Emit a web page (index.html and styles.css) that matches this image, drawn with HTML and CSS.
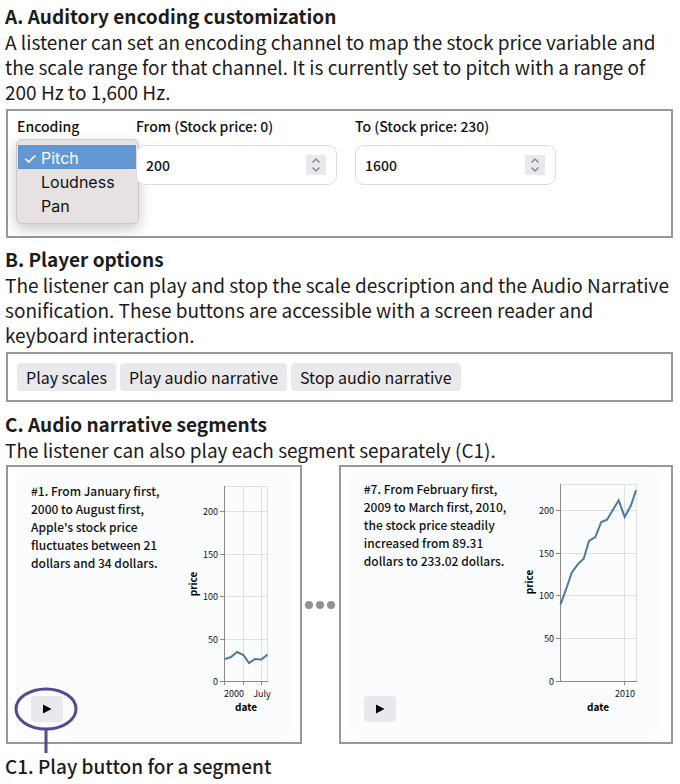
FILE: index.html
```html
<!DOCTYPE html>
<html lang="en">
<head>
<meta charset="utf-8">
<meta name="viewport" content="width=device-width, initial-scale=1">
<title>Audio Narrative player</title>
<link rel="stylesheet" href="styles.css">
</head>
<body>
<main>
  <section class="section">
    <h2>A. Auditory encoding customization</h2>
    <p>A listener can set an encoding channel to map the stock price variable and the scale range for that channel. It is currently set to pitch with a range of 200 Hz to 1,600 Hz.</p>
    <form class="box encoding">
      <div class="field">
        <label for="encoding">Encoding</label>
        <select id="encoding" class="menu" size="3">
          <option selected>Pitch</option>
          <option>Loudness</option>
          <option>Pan</option>
        </select>
      </div>
      <div class="field">
        <label for="from">From (Stock price: 0)</label>
        <div class="number">
          <input id="from" type="number" value="200">
          <svg class="stepper" viewBox="0 0 20 20" aria-hidden="true"><path d="M6.500 7.500 10 4l3.500 3.500M6.500 12.500 10 16l3.500-3.500"/></svg>
        </div>
      </div>
      <div class="field">
        <label for="to">To (Stock price: 230)</label>
        <div class="number">
          <input id="to" type="number" value="1600">
          <svg class="stepper" viewBox="0 0 20 20" aria-hidden="true"><path d="M6.500 7.500 10 4l3.500 3.500M6.500 12.500 10 16l3.500-3.500"/></svg>
        </div>
      </div>
    </form>
  </section>

  <section class="section">
    <h2>B. Player options</h2>
    <p>The listener can play and stop the scale description and the Audio Narrative sonification. These buttons are accessible with a screen reader and keyboard interaction.</p>
    <div class="box player">
      <button type="button">Play scales</button>
      <button type="button">Play audio narrative</button>
      <button type="button">Stop audio narrative</button>
    </div>
  </section>

  <section class="section">
    <h2>C. Audio narrative segments</h2>
    <p>The listener can also play each segment separately (C1).</p>
    <div class="segments">
      <article class="box segment first">
        <div class="card">
          <div class="story">
            <p>#1. From January first, 2000 to August first, Apple's stock price fluctuates between 21 dollars and 34 dollars.</p>
            <div class="play-wrap">
              <button type="button" class="play" aria-label="Play segment 1"><svg viewBox="0 0 10 10" aria-hidden="true"><path d="M1 0.500 9.500 5 1 9.500z"/></svg></button>
              <svg class="callout" viewBox="0 0 64 70" aria-hidden="true"><ellipse cx="32" cy="23" rx="30" ry="20"/><path d="M32 43v24"/></svg>
            </div>
          </div>
          <svg class="chart" width="90" height="236" viewBox="185 480 90 236" role="img" aria-label="Stock price in 2000">
            <path class="grid" d="M225 486.500h43M225 511.500h43M225 554.500h43M225 596.500h43M225 639.500h43M243.500 486v195M261.500 486v195M267.500 486v195"/>
            <path class="axis" d="M224.500 486v199M220 681.500h48M220 511.500h5M220 554.500h5M220 596.500h5M220 639.500h5M243.500 681v4M261.500 681v4"/>
            <path class="line" d="M225 659l6-2 6-5 6.500 3 5.500 8 6-4 6.500.5 6-5"/>
            <g class="ticks"><text x="218" y="515">200</text><text x="218" y="558">150</text><text x="218" y="600">100</text><text x="218" y="643">50</text><text x="218" y="685">0</text></g>
            <g class="dates"><text x="234" y="697">2000</text><text x="262" y="697">July</text></g>
            <text class="name" x="246" y="711">date</text>
            <text class="name" transform="translate(197 584) rotate(-90)">price</text>
          </svg>
        </div>
      </article>
      <div class="dots" aria-hidden="true"><i></i><i></i><i></i></div>
      <article class="box segment second">
        <div class="card">
          <div class="story">
            <p>#7. From February first, 2009 to March first, 2010, the stock price steadily increased from 89.31 dollars to 233.02 dollars.</p>
            <div class="play-wrap">
              <button type="button" class="play" aria-label="Play segment 7"><svg viewBox="0 0 10 10" aria-hidden="true"><path d="M1 0.500 9.500 5 1 9.500z"/></svg></button>
            </div>
          </div>
          <svg class="chart" width="122" height="236" viewBox="519 480 122 236" role="img" aria-label="Stock price from 2009 to 2010">
            <path class="grid" d="M560 484.500h76M560 510.500h76M560 553.500h76M560 595.500h76M560 638.500h76M623.500 484v197M635.500 484v197"/>
            <path class="axis" d="M559.500 484v197M555 681.500h81M555 510.500h5M555 553.500h5M555 595.500h5M555 638.500h5M623.500 681v4"/>
            <path class="line" d="M559.500 604.300 565.300 588.700 570.700 572.700 576.700 564.300 582.700 558.700 588 541 594.300 537 600.300 522 606 519.700 612 509.700 617.700 500.300 623.700 517 630 505.300 635 490.300"/>
            <g class="ticks"><text x="553" y="514">200</text><text x="553" y="557">150</text><text x="553" y="599">100</text><text x="553" y="642">50</text><text x="553" y="685">0</text></g>
            <g class="dates"><text x="624" y="697">2010</text></g>
            <text class="name" x="597" y="711">date</text>
            <text class="name" transform="translate(532 582) rotate(-90)">price</text>
          </svg>
        </div>
      </article>
    </div>
    <h3>C1. Play button for a segment</h3>
  </section>
</main>
</body>
</html>
```
FILE: styles.css
```css
* { box-sizing: border-box; }

body {
  margin: 0;
  padding: 3px 7px 0 5px;
  background: #fff;
  color: #1d1b1c;
  font-family: "Noto Sans CJK SC", "Noto Sans", sans-serif;
  font-size: 19px;
  line-height: 26px;
}

h2, h3, p { margin: 0; }
h2, h3 { font-size: 19px; font-weight: 700; }
h3 { margin-top: 9px; font-weight: 500; }

.section { margin-bottom: 8px; }
.section > p { line-height: 25px; }

.box {
  border: 2px solid #97989a;
  background: #fff;
}

.encoding {
  display: flex;
  flex-wrap: wrap;
  gap: 18px;
  margin: 5px 0 0 1px;
  padding: 5px 9px 51px;
  color: #111;
  font-size: 14px;
  line-height: 20px;
}

.field {
  position: relative;
  display: flex;
  flex-direction: column;
  gap: 9px;
  flex: 0 1 200px;
}
.field:first-child { flex-basis: 101px; }
.field label { font-weight: 500; white-space: nowrap; }

.menu {
  position: absolute;
  top: 23px;
  left: -1px;
  width: 123px;
  height: 85px;
  padding: 5px 2px 5px 1px;
  overflow: hidden;
  border: 1px solid #ccc8c9;
  border-radius: 6px;
  outline: 0;
  background: #e6e1e2;
  box-shadow: 0 5px 14px rgba(0, 0, 0, .22);
  font: 400 16px/24px Inter, sans-serif;
}
.menu option {
  height: 24px;
  min-height: 24px;
  padding: 3px 0 0 23px;
  color: #111;
  line-height: 20px;
}
.menu option:checked {
  padding-left: 5px;
  background: #6397d2 linear-gradient(#6397d2, #6397d2);
  color: #fff;
}
.menu option:checked::before {
  content: "✓";
  display: inline-block;
  width: 18px;
}

.number {
  display: flex;
  align-items: center;
  height: 40px;
  padding: 0 10px 0 9px;
  border: 1px solid #dcdcdd;
  border-radius: 9px;
  background: #fff;
}
.number input {
  flex: 1;
  min-width: 0;
  padding: 0;
  border: 0;
  outline: 0;
  background: none;
  color: #111;
  font: 500 14px/20px "Noto Sans CJK SC", sans-serif;
  appearance: textfield;
}
.number input::-webkit-inner-spin-button { appearance: none; margin: 0; }
.stepper {
  width: 20px;
  height: 20px;
  background: #e9e8ed;
  fill: none;
  stroke: #8b8a90;
  stroke-width: 1.500;
}

.player {
  display: flex;
  flex-wrap: wrap;
  gap: 4px;
  margin: 5px 0 9px 1px;
  padding: 9px;
}
button {
  height: 28px;
  padding: 0 9px;
  border: 0;
  border-radius: 4px;
  background: #e9e8ec;
  color: #111;
  font: 400 16px/28px "Noto Sans CJK SC", sans-serif;
}

.segments { display: flex; margin: 3px 0 0 1px; }
.segment { min-width: 0; padding: 1px 8px 3px; }
.first { flex: 296 1 0; }
.second { flex: 333 1 0; padding-right: 12px; }
.card {
  display: flex;
  justify-content: space-between;
  min-height: 271px;
  padding: 12px 17px 17px 15px;
  border-radius: 16px;
  background: #fafcfd;
}
.story {
  display: flex;
  flex: 0 1 150px;
  flex-direction: column;
  justify-content: space-between;
  color: #111;
  font-size: 12px;
  font-weight: 500;
  line-height: 18px;
}
.first .story { padding-top: 2px; }
.play-wrap { position: relative; width: 32px; height: 26px; }
.play {
  display: flex;
  align-items: center;
  justify-content: center;
  width: 32px;
  height: 26px;
  padding: 0;
}
.play svg { width: 10px; height: 10px; fill: #000; }
.callout {
  position: absolute;
  top: -10px;
  left: -17px;
  width: 64px;
  height: 70px;
  fill: none;
  stroke: #5b478f;
  stroke-width: 3;
  pointer-events: none;
}

.dots {
  display: flex;
  align-items: center;
  justify-content: center;
  gap: 3px;
  flex: 0 0 37px;
}
.dots i { width: 8px; height: 8px; border-radius: 50%; background: #929395; }

.chart { flex: none; }
.grid { fill: none; stroke: #dedfdf; }
.axis { fill: none; stroke: #8a8a8a; }
.line { fill: none; stroke: #50779f; stroke-width: 2; }
.ticks, .dates { fill: #111; font-size: 9px; font-weight: 400; }
.ticks { text-anchor: end; }
.dates, .name { text-anchor: middle; }
.name { fill: #000; font-size: 10px; font-weight: 700; }
```
